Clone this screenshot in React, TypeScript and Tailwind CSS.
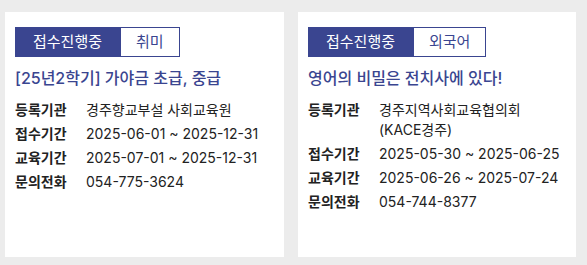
const courses = [
  {
    category: "취미",
    title: "[25년2학기] 가야금 초급, 중급",
    org: "경주향교부설 사회교육원",
    apply: "2025-06-01 ~ 2025-12-31",
    period: "2025-07-01 ~ 2025-12-31",
    phone: "054-775-3624",
  },
  {
    category: "외국어",
    title: "영어의 비밀은 전치사에 있다!",
    org: "경주지역사회교육협의회 (KACE경주)",
    apply: "2025-05-30 ~ 2025-06-25",
    period: "2025-06-26 ~ 2025-07-24",
    phone: "054-744-8377",
  },
];

function InfoRow({ label, value }: { label: string; value: string }) {
  return (
    <div className="flex text-[14px] leading-[20px] text-[#222]">
      <span className="w-[71px] shrink-0 font-bold">{label}</span>
      <span className="flex-1">{value}</span>
    </div>
  );
}

export default function App() {
  return (
    <div
      className="flex h-[265px] w-[587px] gap-[14px] bg-[#ececec] pl-[5px] pt-[12px]"
      style={{ fontFamily: 'Inter, "Noto Sans CJK KR", sans-serif' }}
    >
      {courses.map((course, index) => (
        <div
          key={course.title}
          className={`h-[245px] bg-white pl-[10px] pr-[10px] pt-[15px] ${index === 0 ? "w-[279px]" : "w-[278px]"}`}
        >
          <div className="flex h-[30px] text-[15px]">
            <span className="flex items-center bg-[#3a4590] px-[18px] text-white">접수진행중</span>
            <span className="flex items-center border border-[#3a4590] px-[15px] text-[#3a4590]">
              {course.category}
            </span>
          </div>
          <h3 className="mt-[9px] text-[16px] font-medium leading-[24px] text-[#3a4590]">
            {course.title}
          </h3>
          <div className="mt-[10px] flex flex-col gap-[4px]">
            <InfoRow label="등록기관" value={course.org} />
            <InfoRow label="접수기간" value={course.apply} />
            <InfoRow label="교육기간" value={course.period} />
            <InfoRow label="문의전화" value={course.phone} />
          </div>
        </div>
      ))}
    </div>
  );
}
